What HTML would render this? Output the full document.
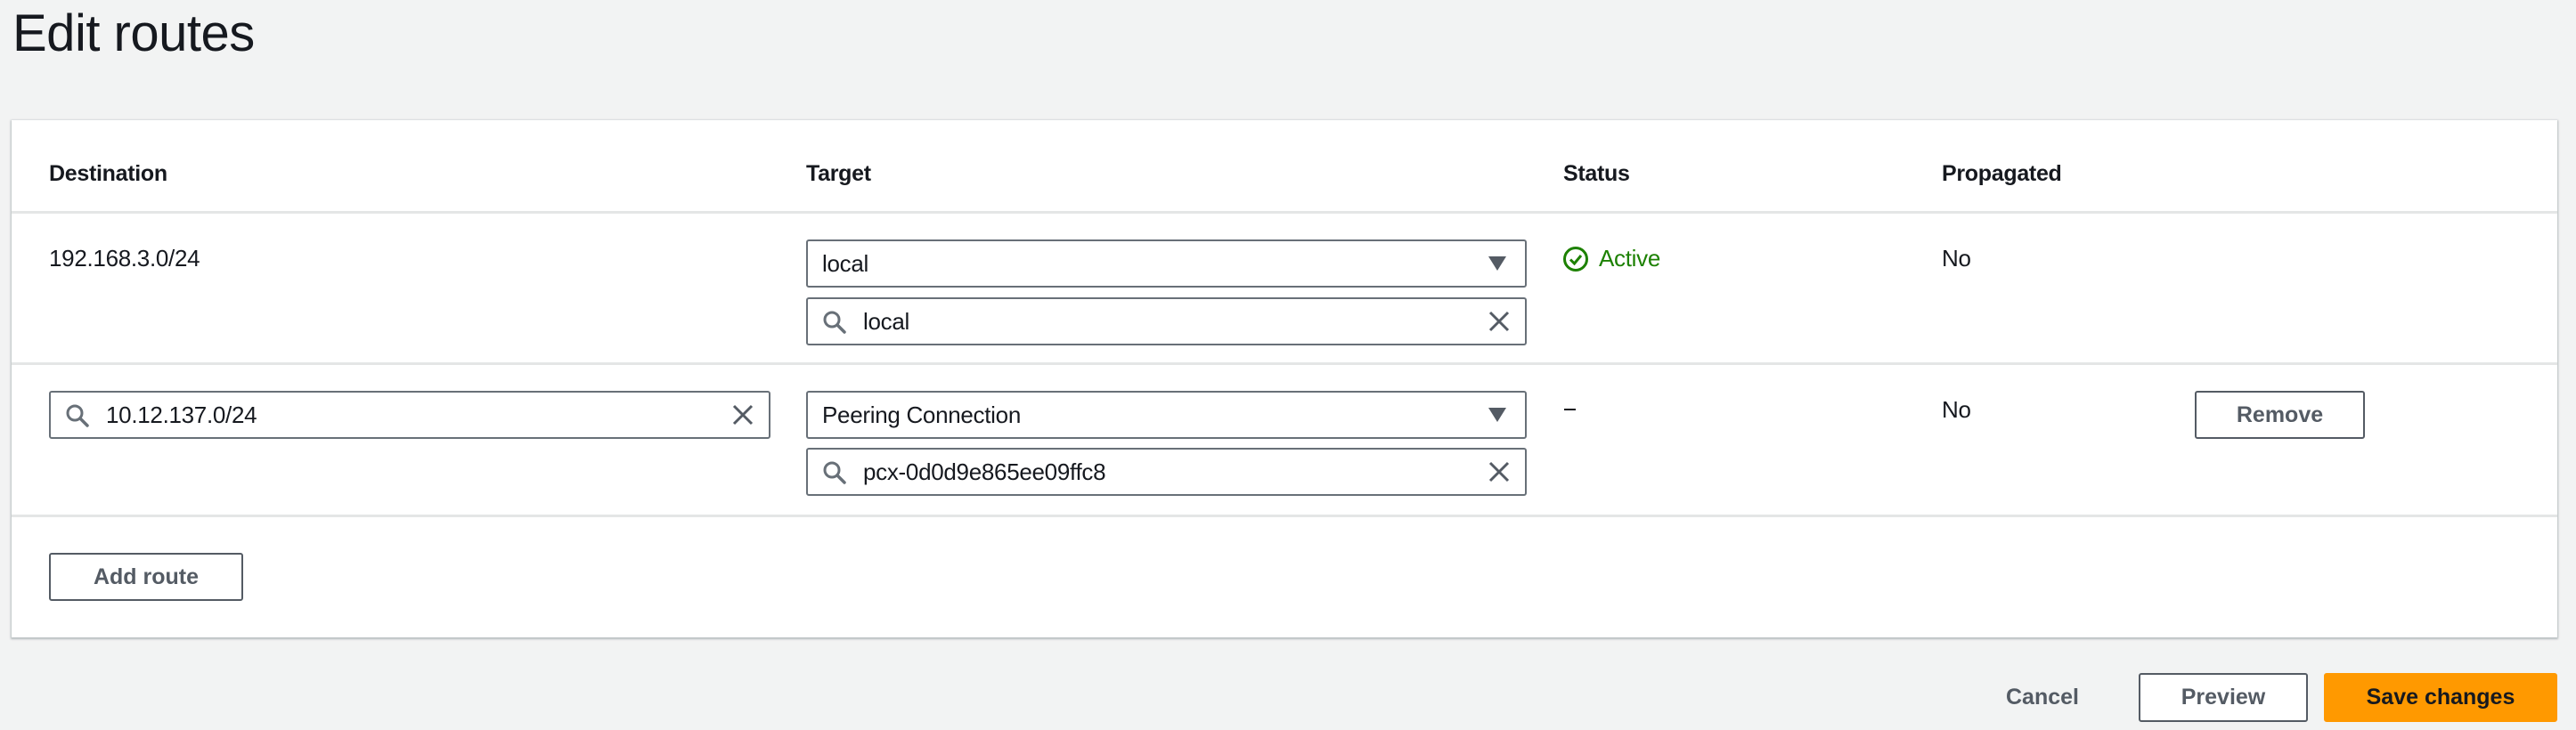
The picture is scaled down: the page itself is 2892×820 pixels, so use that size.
<!DOCTYPE html>
<html><head><meta charset="utf-8"><style>
*{box-sizing:border-box;margin:0;padding:0}
body{width:2892px;height:820px;background:#f2f3f3;font-family:"Liberation Sans",sans-serif;color:#16191f;position:relative;overflow:hidden}
.a{position:absolute}
h1{position:absolute;left:14px;top:4px;font-size:58px;font-weight:400;letter-spacing:-0.5px;color:#16191f}
.card{position:absolute;left:13px;top:135px;width:2858px;height:581px;background:#fff;box-shadow:0 1px 2px 1px rgba(0,28,36,.25)}
.th{position:absolute;top:181px;font-size:25px;font-weight:700;letter-spacing:-.3px}
.hr{position:absolute;left:13px;width:2858px;height:3px;background:#e4e6e6}
.t{position:absolute;font-size:26px;letter-spacing:-.3px}
.box{position:absolute;border:2px solid #687078;border-radius:3px;background:#fff;height:54px;font-size:26px;letter-spacing:-.3px;line-height:50px;padding-left:16px}
.box.s{padding-left:62px}
.box svg{position:absolute}
.btn{position:absolute;border:2px solid #545b64;border-radius:3px;background:#fff;color:#545b64;font-weight:700;font-size:25px;text-align:center;line-height:50px;height:54px}
</style></head><body>
<h1>Edit routes</h1>
<div class="card"></div>
<div class="th" style="left:55px">Destination</div>
<div class="th" style="left:905px">Target</div>
<div class="th" style="left:1755px">Status</div>
<div class="th" style="left:2180px">Propagated</div>
<div class="hr" style="top:237px"></div>
<div class="hr" style="top:407px"></div>
<div class="hr" style="top:578px"></div>

<div class="t" style="left:55px;top:275px">192.168.3.0/24</div>
<div class="box" style="left:905px;top:269px;width:809px">local
<svg style="right:20px;top:16px" width="22" height="18" viewBox="0 0 22 18"><path d="M1 1H21L11 17Z" fill="#545b64"/></svg></div>
<div class="box s" style="left:905px;top:334px;width:809px">local
<svg style="left:16px;top:12px" width="28" height="28" viewBox="0 0 28 28"><circle cx="11" cy="11" r="8" fill="none" stroke="#687078" stroke-width="3"/><path d="M17 17L25 25" stroke="#687078" stroke-width="3.5" stroke-linecap="round"/></svg>
<svg style="right:16px;top:12px" width="26" height="26" viewBox="0 0 26 26"><path d="M3 3L23 23M23 3L3 23" stroke="#545b64" stroke-width="3"/></svg></div>
<svg class="a" style="left:1754px;top:276px" width="30" height="30" viewBox="0 0 30 30"><circle cx="15" cy="15" r="12.5" fill="none" stroke="#1d8102" stroke-width="3"/><path d="M9 15.5L13.5 20L21 11" fill="none" stroke="#1d8102" stroke-width="3"/></svg>
<div class="t" style="left:1795px;top:275px;color:#1d8102">Active</div>
<div class="t" style="left:2180px;top:275px">No</div>

<div class="box s" style="left:55px;top:439px;width:810px">10.12.137.0/24
<svg style="left:16px;top:12px" width="28" height="28" viewBox="0 0 28 28"><circle cx="11" cy="11" r="8" fill="none" stroke="#687078" stroke-width="3"/><path d="M17 17L25 25" stroke="#687078" stroke-width="3.5" stroke-linecap="round"/></svg>
<svg style="right:16px;top:12px" width="26" height="26" viewBox="0 0 26 26"><path d="M3 3L23 23M23 3L3 23" stroke="#545b64" stroke-width="3"/></svg></div>
<div class="box" style="left:905px;top:439px;width:809px">Peering Connection
<svg style="right:20px;top:16px" width="22" height="18" viewBox="0 0 22 18"><path d="M1 1H21L11 17Z" fill="#545b64"/></svg></div>
<div class="box s" style="left:905px;top:503px;width:809px">pcx-0d0d9e865ee09ffc8
<svg style="left:16px;top:12px" width="28" height="28" viewBox="0 0 28 28"><circle cx="11" cy="11" r="8" fill="none" stroke="#687078" stroke-width="3"/><path d="M17 17L25 25" stroke="#687078" stroke-width="3.5" stroke-linecap="round"/></svg>
<svg style="right:16px;top:12px" width="26" height="26" viewBox="0 0 26 26"><path d="M3 3L23 23M23 3L3 23" stroke="#545b64" stroke-width="3"/></svg></div>
<div class="a" style="left:1756px;top:459px;width:13px;height:2px;background:#16191f"></div>
<div class="t" style="left:2180px;top:445px">No</div>
<div class="btn" style="left:2464px;top:439px;width:191px">Remove</div>

<div class="btn" style="left:55px;top:621px;width:218px">Add route</div>

<div class="a" style="left:2252px;top:769px;font-size:25px;font-weight:700;color:#545b64">Cancel</div>
<div class="btn" style="left:2401px;top:756px;width:190px;height:55px">Preview</div>
<div class="btn" style="left:2609px;top:756px;width:262px;height:55px;background:#ff9900;border-color:#ff9900;color:#16191f">Save changes</div>
</body></html>
